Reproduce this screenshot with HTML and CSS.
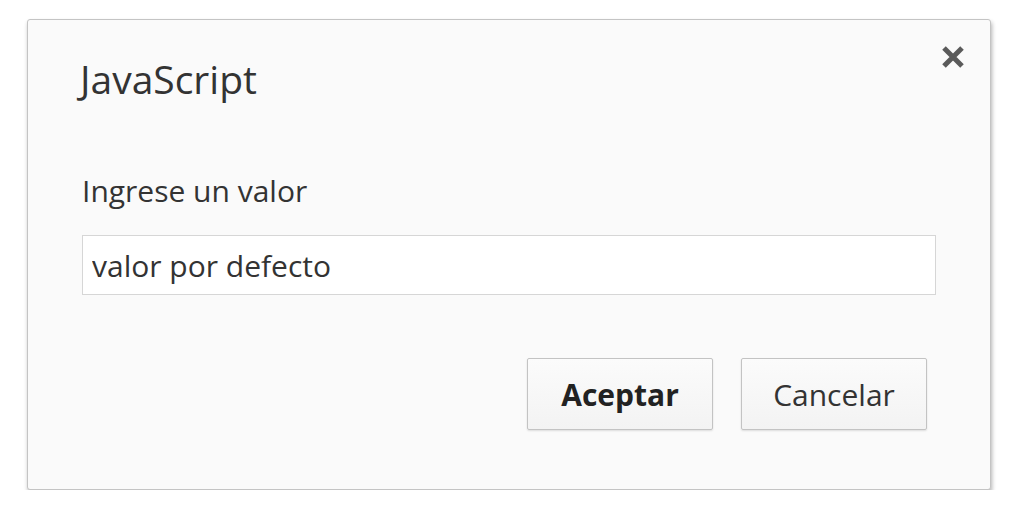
FILE: index.html
```html
<!DOCTYPE html>
<html lang="es">
<head>
<meta charset="utf-8">
<title>JavaScript</title>
<link rel="stylesheet" href="styles.css">
</head>
<body>
<div class="dialog">
  <button class="close" aria-label="Cerrar">
    <svg width="24" height="22" viewBox="0 0 24 22"><path d="M3 2 L21 20 M21 2 L3 20" stroke="#5a5a5a" stroke-width="5" stroke-linecap="butt"/></svg>
  </button>
  <h1 class="title">JavaScript</h1>
  <label class="label" for="val">Ingrese un valor</label>
  <input id="val" class="field" type="text" value="valor por defecto">
  <div class="actions">
    <button class="btn btn-primary">Aceptar</button>
    <button class="btn">Cancelar</button>
  </div>
</div>
</body>
</html>
```

FILE: styles.css
```css
html, body {
  margin: 0;
  padding: 0;
  background: #ffffff;
}
body {
  font-family: "Open Sans", "Noto Sans", sans-serif;
  color: #333333;
}
.dialog {
  position: relative;
  box-sizing: border-box;
  margin: 19px 0 0 27px;
  width: 964px;
  height: 471px;
  background: #fafafa;
  border: 1px solid #c4c4c4;
  border-radius: 3px;
  box-shadow: 1px 3px 4px rgba(0, 0, 0, 0.3);
  padding: 37px 54px 0 54px;
  display: flex;
  flex-direction: column;
}
.close {
  position: absolute;
  left: 913px;
  top: 26px;
  width: 24px;
  height: 22px;
  padding: 0;
  border: 0;
  background: transparent;
  display: flex;
}
.title {
  margin: 0 0 0 -2px;
  font-size: 39px;
  line-height: 44px;
  font-weight: 400;
  color: #333;
}
.label {
  margin-top: 73px;
  font-size: 30px;
  line-height: 34px;
  color: #333;
}
.field {
  box-sizing: border-box;
  margin-top: 27px;
  width: 100%;
  height: 60px;
  border: 1px solid #d6d6d6;
  background: #ffffff;
  padding: 0 9px;
  font-family: inherit;
  font-size: 30px;
  color: #333;
  outline: none;
}
.actions {
  margin-top: 63px;
  margin-right: 9px;
  display: flex;
  justify-content: flex-end;
  gap: 28px;
}
.btn {
  box-sizing: border-box;
  width: 186px;
  height: 72px;
  border: 1px solid #c3c3c3;
  border-radius: 2px;
  background: linear-gradient(#fbfbfb, #f3f3f3);
  box-shadow: 0 1px 2px rgba(0, 0, 0, 0.12);
  font-family: inherit;
  font-size: 30px;
  color: #333;
  padding: 0;
}
.btn-primary {
  font-weight: 700;
  color: #222;
}
```
